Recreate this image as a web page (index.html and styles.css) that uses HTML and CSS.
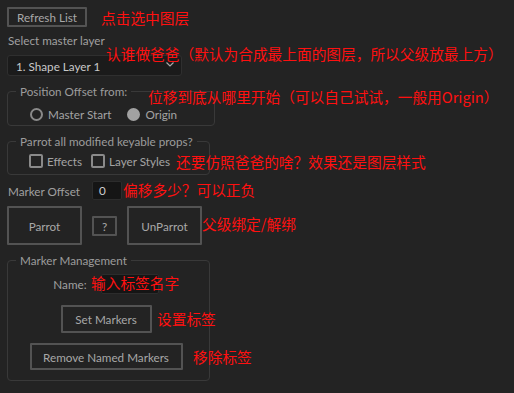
FILE: index.html
```html
<!DOCTYPE html>
<html lang="zh">
<head>
<meta charset="utf-8">
<title>Parrot</title>
<link rel="stylesheet" href="styles.css">
</head>
<body>
<div class="stage">
  <div class="panel">
    <button class="btn refresh">Refresh List</button>
    <div class="label">Select master layer</div>
    <div class="select">
      <span>1. Shape Layer 1</span>
      <svg class="chev" width="8" height="5" viewBox="0 0 8 5"><path d="M0.5 0.5 L4 4 L7.5 0.5" fill="none" stroke="#a8a8a8" stroke-width="1.2"/></svg>
    </div>

    <fieldset class="group g-offset">
      <legend>Position Offset from:</legend>
      <div class="opts">
        <label class="opt"><span class="radio"></span>Master Start</label>
        <label class="opt"><span class="radio on"></span>Origin</label>
      </div>
    </fieldset>

    <fieldset class="group g-props">
      <legend>Parrot all modified keyable props?</legend>
      <div class="opts">
        <label class="opt"><span class="check"></span>Effects</label>
        <label class="opt"><span class="check"></span>Layer Styles</label>
      </div>
    </fieldset>

    <div class="offset-row">
      <span class="label">Marker Offset</span>
      <div class="field num">0</div>
    </div>

    <div class="btn-row">
      <button class="btn big">Parrot</button>
      <button class="btn small">?</button>
      <button class="btn big">UnParrot</button>
    </div>

    <fieldset class="group g-markers">
      <legend>Marker Management</legend>
      <div class="markers">
        <div class="name-row">
          <span class="label">Name:</span>
          <div class="field name"></div>
        </div>
        <button class="btn set">Set Markers</button>
        <button class="btn remove">Remove Named Markers</button>
      </div>
    </fieldset>
  </div>

  <div class="notes">
    <span class="note n1">点击选中图层</span>
    <span class="note n2">认谁做爸爸（默认为合成最上面的图层，所以父级放最上方）</span>
    <span class="note n3">位移到底从哪里开始（可以自己试试，一般用Origin）</span>
    <span class="note n4">还要仿照爸爸的啥？效果还是图层样式</span>
    <span class="note n5">偏移多少？可以正负</span>
    <span class="note n6">父级绑定/解绑</span>
    <span class="note n7">输入标签名字</span>
    <span class="note n8">设置标签</span>
    <span class="note n9">移除标签</span>
  </div>
</div>
</body>
</html>
```

FILE: styles.css
```css
html, body {
  margin: 0;
  padding: 0;
  background: #232323;
}
body {
  width: 514px;
  height: 393px;
  overflow: hidden;
  font-family: Lato, "Noto Sans", sans-serif;
  font-size: 11.7px;
  color: #a3a3a3;
}
.stage {
  position: relative;
  width: 514px;
  height: 393px;
}
.panel {
  padding: 7px 0 0 7px;
  display: flex;
  flex-direction: column;
  align-items: flex-start;
}
.btn {
  box-sizing: border-box;
  background: #232323;
  border: 2px solid #535353;
  border-radius: 1px;
  color: #a8a8a8;
  font-family: inherit;
  font-size: 11.7px;
  padding: 0;
  margin: 0;
  display: flex;
  align-items: center;
  justify-content: center;
}
.refresh {
  width: 80px;
  height: 20px;
}
.label {
  line-height: 16px;
  color: #a0a0a0;
  white-space: nowrap;
}
.panel > .label {
  margin-top: 5px;
  margin-left: 1px;
}
.select {
  box-sizing: border-box;
  margin-top: 7px;
  width: 175px;
  height: 21px;
  background: #1b1b1b;
  border: 1px solid #2f2f2f;
  border-radius: 3px;
  display: flex;
  align-items: center;
  justify-content: space-between;
  padding: 0 7px 0 8px;
  color: #c9c9c9;
}
.chev {
  margin-top: -3px;
}
.group {
  box-sizing: border-box;
  margin: 8px 0 0 0;
  padding: 0;
  border: 1px solid #393939;
  border-radius: 4px;
  min-inline-size: 0;
}
.group legend {
  margin-left: 8px;
  padding: 0 4px;
  line-height: 14px;
  color: #9c9c9c;
  white-space: nowrap;
}
.g-offset {
  width: 208px;
}
.g-offset .opts {
  padding: 9px 0 4px 22px;
  gap: 16px;
}
.g-props {
  width: 203px;
}
.g-props .opts {
  padding: 6px 0 6px 21px;
  gap: 9px;
}
.g-markers {
  width: 203px;
}
.opts {
  display: flex;
  height: 14px;
  align-items: center;
}
.opt {
  display: flex;
  align-items: center;
  gap: 5px;
  color: #a3a3a3;
  white-space: nowrap;
}
.g-props .opt {
  gap: 4px;
}
.radio {
  box-sizing: border-box;
  width: 13px;
  height: 13px;
  border: 2px solid #8a8a8a;
  border-radius: 50%;
}
.radio.on {
  background: #a2a2a2;
  border-color: #a2a2a2;
}
.check {
  box-sizing: border-box;
  width: 14px;
  height: 14px;
  border: 2px solid #8a8a8a;
  border-radius: 2px;
}
.offset-row {
  margin-top: 6px;
  display: flex;
  align-items: center;
  gap: 12px;
  margin-left: 1px;
}
.field {
  box-sizing: border-box;
  background: #151515;
  border: 1px solid #2c2c2c;
  border-radius: 2px;
  color: #cfcfcf;
}
.num {
  width: 30px;
  height: 19px;
  line-height: 17px;
  padding-left: 6px;
}
.btn-row {
  margin-top: 6px;
  display: flex;
  align-items: center;
  gap: 10px;
}
.big {
  width: 75px;
  height: 39px;
}
.small {
  width: 25px;
  height: 20px;
}
.markers {
  display: flex;
  flex-direction: column;
  align-items: center;
  padding: 7px 5px 10px 0;
}
.name-row {
  display: flex;
  align-items: center;
  gap: 14px;
}
.name {
  width: 58px;
  height: 20px;
}
.set {
  margin-top: 11px;
  width: 91px;
  height: 28px;
}
.remove {
  margin-top: 10px;
  width: 153px;
  height: 27px;
}
.notes {
  position: absolute;
  inset: 0;
  pointer-events: none;
}
.note {
  position: absolute;
  font-family: "Noto Sans CJK SC", sans-serif;
  font-size: 14.7px;
  line-height: 15px;
  color: #ff1010;
  white-space: nowrap;
}
.n1 { left: 101px; top: 10px; }
.n2 { left: 106px; top: 46px; }
.n3 { left: 148px; top: 89px; }
.n4 { left: 176px; top: 154px; }
.n5 { left: 123px; top: 182px; }
.n6 { left: 202px; top: 216px; }
.n7 { left: 91px; top: 275px; }
.n8 { left: 157px; top: 311px; }
.n9 { left: 193px; top: 349px; }
```
